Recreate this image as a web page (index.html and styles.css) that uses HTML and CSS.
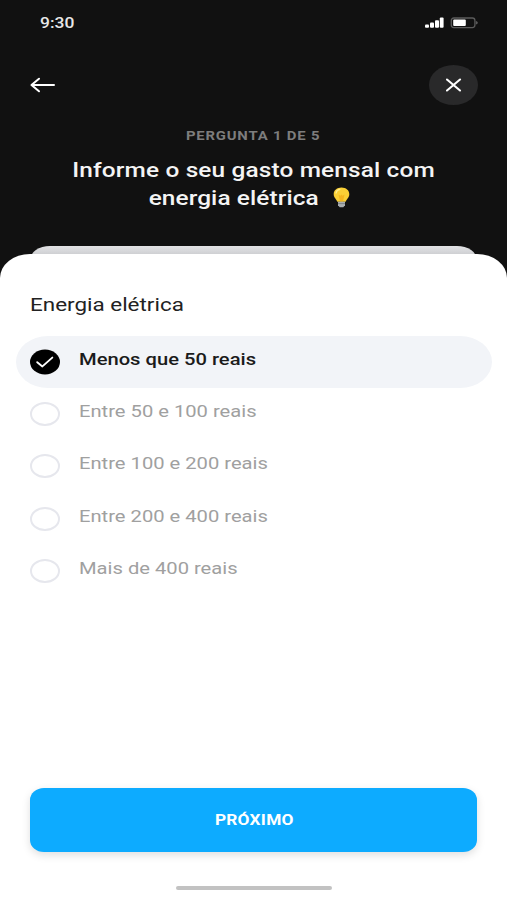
FILE: index.html
```html
<!DOCTYPE html>
<html lang="pt-BR">
<head>
<meta charset="utf-8">
<title>Energia elétrica</title>
<link rel="stylesheet" href="styles.css">
</head>
<body>
<div class="screen">
  <header class="top">
    <div class="status">
      <span class="wide time">9:30</span>
      <svg class="signals" width="54" height="12" viewBox="0 0 54 12">
        <g fill="#fff"><rect x="1" y="7.4" width="4" height="3.4" rx="1"/><rect x="6" y="5.6" width="4" height="5.2" rx="1"/><rect x="11" y="3.3" width="4" height="7.5" rx="1"/><rect x="15.800" y="0.6" width="3.8" height="10.2" rx="1"/></g>
        <rect x="27.300" y="1" width="23.6" height="9.6" rx="2.5" fill="none" stroke="#5b5b5b" stroke-width="1.3"/>
        <rect x="29.200" y="2.600" width="12.6" height="6.4" rx="1" fill="#fff"/>
        <path d="M51.800 4v3.6c1.400-.3 2-1 2-1.800s-.6-1.500-2-1.800z" fill="#5b5b5b"/>
      </svg>
    </div>
    <nav class="nav">
      <svg class="back" width="26" height="16" viewBox="0 0 26 16" fill="none" stroke="#fff" stroke-width="2" stroke-linecap="round" stroke-linejoin="round"><path d="M9 1.700L1.500 8L9 14.300M1.500 8H24"/></svg>
      <div class="close">
        <svg width="16" height="14" viewBox="0 0 16 14" fill="none" stroke="#fff" stroke-width="2.100" stroke-linecap="round"><path d="M1 1.500L14 12.500M14 1.500L1 12.500"/></svg>
      </div>
    </nav>
    <div class="step"><span class="wide">PERGUNTA 1 DE 5</span></div>
    <h1 class="title">
      <span class="line"><span class="wide">Informe o seu gasto mensal com</span></span>
      <span class="line second"><span class="wide">energia elétrica</span></span>
      <svg class="bulb" width="17" height="21" viewBox="0 0 17 21">
        <path d="M8.500.5C4 .5.7 3.300.7 7.200c0 3.300 2.800 5 3.700 7.600h8.200c.9-2.600 3.700-4.300 3.700-7.600C16.300 3.300 13 .5 8.500.5z" fill="#f9cf35"/>
        <path d="M5.500 7.500l2 1.300 1-1.300 1 1.300 2-1.300-1.500 7H7z" fill="#f3b51f"/>
        <path d="M3 6.500C3.300 4 5 2.600 7.300 2.300" stroke="#ffec8a" stroke-width="1.500" fill="none"/>
        <path d="M5 14.800h7v3.400l-1.700 2H6.700L5 18.200z" fill="#a9adb0"/>
        <path d="M5 16.600h7" stroke="#74787b" stroke-width=".8"/>
      </svg>
    </h1>
    <div class="peek"></div>
  </header>
  <main class="sheet">
    <h2 class="heading"><span class="wide">Energia elétrica</span></h2>
    <ul class="options">
      <li class="option selected">
        <svg class="mark" width="30" height="26" viewBox="0 0 30 26"><ellipse cx="15" cy="13" rx="15" ry="12.500" fill="#000"/><path d="M7.200 13.200L12.400 17.400L22.300 8.600" fill="none" stroke="#fff" stroke-width="1.900" stroke-linecap="round" stroke-linejoin="round"/></svg>
        <span class="wide">Menos que 50 reais</span>
      </li>
      <li class="option"><i class="mark ring"></i><span class="wide">Entre 50 e 100 reais</span></li>
      <li class="option"><i class="mark ring"></i><span class="wide">Entre 100 e 200 reais</span></li>
      <li class="option"><i class="mark ring"></i><span class="wide">Entre 200 e 400 reais</span></li>
      <li class="option"><i class="mark ring"></i><span class="wide">Mais de 400 reais</span></li>
    </ul>
    <button class="next"><span class="wide">PRÓXIMO</span></button>
    <div class="home"></div>
  </main>
</div>
</body>
</html>
```

FILE: styles.css
```css
* { box-sizing: border-box; }
body { margin: 0; font-family: Roboto, "Liberation Sans", sans-serif; background: #fff; }
.screen { width: 507px; height: 900px; background: #111; display: flex; flex-direction: column; overflow: hidden; }
.wide { display: inline-block; white-space: nowrap; transform: scaleX(1.22); transform-origin: left center; }
.top { height: 254px; flex: none; display: flex; flex-direction: column; }
.status { height: 46px; flex: none; padding: 17px 29px 0 40px; display: flex; justify-content: space-between; align-items: flex-start; }
.time { font-size: 14.300px; line-height: 12px; font-weight: 500; color: #e8e8e8; }
.nav { height: 78px; flex: none; padding: 0 29px 0 30px; display: flex; justify-content: space-between; align-items: center; }
.close { width: 49px; height: 40px; border-radius: 50%; background: #29292a; display: flex; align-items: center; justify-content: center; }
.step { margin-top: 4px; height: 16px; line-height: 16px; text-align: center; font-size: 12.200px; font-weight: 700; letter-spacing: .66px; color: #7d7d7d; }
.step .wide, .title .wide, .next .wide { transform-origin: center; }
.title { margin: 12px 0 0; height: 56px; font-size: 20px; line-height: 28px; font-weight: 500; letter-spacing: .12px; color: #f4f4f4; display: grid; grid-template-columns: 1fr 135px; }
.line { text-align: center; grid-column: 1 / 3; }
.second { grid-column: 1 / 2; padding-left: 96px; letter-spacing: .08px; }
.bulb { margin: 3px 0 0 -39px; }
.peek { height: 20px; flex: none; margin: auto 30px -12px; background: linear-gradient(#e3e4e6, #cfd0d3 8px); border-radius: 20px 20px 0 0 / 14px 14px 0 0; }
.sheet { position: relative; flex: 1; background: #fff; border-radius: 30px 30px 0 0 / 24px 24px 0 0; padding: 36px 30px 0; display: flex; flex-direction: column; }
.heading { margin: 0; height: 30px; line-height: 30px; font-size: 18.400px; font-weight: 400; color: #222; }
.options { list-style: none; margin: 16px -15px 0 -14px; padding: 0; }
.option { height: 52.200px; padding: 0 14px; display: flex; align-items: center; gap: 19px; font-size: 16.550px; color: #a0a0a0; }
.option .wide { line-height: 20px; margin-bottom: 4px; }
.selected { background: #f2f4f8; border-radius: 32px / 26px; font-weight: 500; color: #1b1b1b; }
.mark { width: 30px; flex: none; }
.ring { height: 24px; border: 2px solid #e6e7ed; border-radius: 50%; }
.next { margin-top: auto; height: 64px; flex: none; border: 0; border-radius: 14px / 12px; background: #0dabff; box-shadow: 0 3px 8px rgba(0,0,0,.13); color: #fff; font: 700 14.200px/20px Roboto, sans-serif; letter-spacing: .2px; padding: 0 5px 0 6px; }
.home { width: 156px; height: 4px; background: #c2c2c2; border-radius: 2px; margin: 34px auto 10px; flex: none; }
```
